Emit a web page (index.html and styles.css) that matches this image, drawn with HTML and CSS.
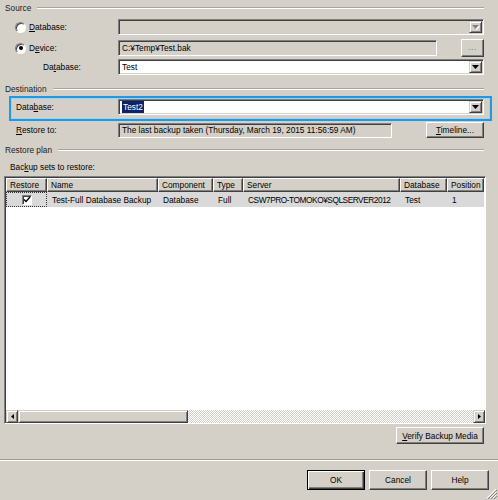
FILE: index.html
```html
<!DOCTYPE html>
<html>
<head>
<meta charset="utf-8">
<link rel="stylesheet" href="styles.css">
</head>
<body>
<div class="main">
  <div class="hdr"><span>Source</span><i></i></div>

  <div class="row r1">
    <div class="lab"><span class="radio"></span><span><u>D</u>atabase:</span></div>
    <div class="combo disabled"><div class="val"></div><div class="ddbtn"><svg width="7" height="4" viewBox="0 0 7 4"><path d="M0 0h7L3.5 4z" fill="#808080"/></svg></div></div>
  </div>

  <div class="row r2">
    <div class="lab"><span class="radio on"></span><span>D<u>e</u>vice:</span></div>
    <div class="tb disabled dev">C:¥Temp¥Test.bak</div>
    <div class="btn dots">...</div>
  </div>

  <div class="row r3">
    <div class="lab ind">Da<u>t</u>abase:</div>
    <div class="combo"><div class="val">Test</div><div class="ddbtn"><svg width="7" height="4" viewBox="0 0 7 4"><path d="M0 0h7L3.5 4z" fill="#000"/></svg></div></div>
  </div>

  <div class="hdr h2"><span>Destination</span><i></i></div>

  <div class="hilite">
    <div class="lab lab2">Data<u>b</u>ase:</div>
    <div class="combo"><div class="val"><span class="sel">Test2</span></div><div class="ddbtn"><svg width="7" height="4" viewBox="0 0 7 4"><path d="M0 0h7L3.5 4z" fill="#000"/></svg></div></div>
  </div>

  <div class="row r4">
    <div class="lab lab3"><u>R</u>estore to:</div>
    <div class="tb disabled rto">The last backup taken (Thursday, March 19, 2015 11:56:59 AM)</div>
    <div class="btn tl"><span><u>T</u>imeline...</span></div>
  </div>

  <div class="hdr h3"><span>Restore plan</span><i></i></div>

  <div class="sets">Bac<u>k</u>up sets to restore:</div>

  <div class="grid">
    <div class="inner">
      <div class="cols head">
        <div class="th">Restore</div>
        <div class="th">Name</div>
        <div class="th">Component</div>
        <div class="th">Type</div>
        <div class="th">Server</div>
        <div class="th">Database</div>
        <div class="th">Position</div>
      </div>
      <div class="cols datarow">
        <div class="td chk"><span class="cb"><svg width="8" height="8" viewBox="0 0 8 8"><path d="M1 3.5l2 2 4-4.5" fill="none" stroke="#000" stroke-width="1.4"/></svg></span></div>
        <div class="td">Test-Full Database Backup</div>
        <div class="td">Database</div>
        <div class="td">Full</div>
        <div class="td srv">CSW7PRO-TOMOKO¥SQLSERVER2012</div>
        <div class="td">Test</div>
        <div class="td">1</div>
      </div>
      <div class="fill"></div>
      <div class="hs">
        <div class="sbb"><svg width="3" height="5" viewBox="0 0 3 5"><path d="M3 0v5L0 2.5z" fill="#000"/></svg></div>
        <div class="thumb"></div>
        <div class="track"></div>
        <div class="sbb"><svg width="3" height="5" viewBox="0 0 3 5"><path d="M0 0v5l3-2.5z" fill="#000"/></svg></div>
      </div>
    </div>
  </div>

  <div class="vrow"><div class="btn verify"><span><u>V</u>erify Backup Media</span></div></div>
</div>

<div class="sep"></div>

<div class="foot">
  <div class="btn big def">OK</div>
  <div class="btn big">Cancel</div>
  <div class="btn big">Help</div>
</div>

<svg class="grip" width="11" height="11" viewBox="0 0 11 11">
  <path d="M10 1L1 10M10 4L4 10M10 7L7 10" stroke="#fff" stroke-width="1"/>
  <path d="M11 2L2 11M11 5L5 11M11 8L8 11" stroke="#808080" stroke-width="1"/>
</svg>
</body>
</html>
```

FILE: styles.css
```css
* { box-sizing: border-box; }
body {
  margin: 0;
  width: 498px;
  height: 500px;
  overflow: hidden;
  position: relative;
  background: #d4d0c8;
  font-family: "Liberation Sans", Arial, sans-serif;
  font-size: 8.3px;
  color: #000;
}
u { text-decoration: underline; text-underline-offset: 1px; }
.main { margin-left: 4px; width: 482px; }

.hdr { display: flex; align-items: center; height: 16px; padding-left: 1px; color: #222; }
.hdr i { flex: 1; margin: 0 2px 0 6px; border-top: 1px solid #a8a49c; border-bottom: 1px solid #fff; }
.h2 { margin-top: 5px; }
.h3 { margin-top: 3px; }

.row { display: flex; align-items: center; }
.r1 { height: 22px; }
.r2 { height: 20px; }
.r3 { height: 18px; }
.r4 { height: 18px; }

.lab { width: 114px; flex: none; display: flex; align-items: center; white-space: nowrap; }
.ind { padding-left: 39px; }
.lab2 { width: 107px; padding-left: 5px; }
.lab3 { padding-left: 12px; }

.radio {
  width: 11px; height: 11px; margin-left: 11px; margin-right: 3px;
  border-radius: 50%; background: #fff;
  border: 1px solid; border-color: #808080 #fff #fff #808080;
  box-shadow: inset 1px 1px #404040;
  display: flex; align-items: center; justify-content: center;
}
.radio.on::after { content: ""; width: 4px; height: 4px; border-radius: 50%; background: #000; }

.combo, .tb {
  height: 16px; background: #fff;
  border: 1px solid; border-color: #808080 #fff #fff #808080;
  box-shadow: inset 1px 1px #404040, inset -1px -1px #d4d0c8;
  padding: 1px;
}
.combo { flex: 1; margin-right: 2px; display: flex; }
.disabled { background: #d4d0c8; }
.val { flex: 1; padding-left: 2px; line-height: 12px; white-space: nowrap; overflow: hidden; }
.sel { background: #0a246a; color: #fff; padding: 1px 1px; }
.ddbtn {
  width: 13px; flex: none; background: #d4d0c8;
  border: 1px solid; border-color: #d4d0c8 #404040 #404040 #d4d0c8;
  box-shadow: inset 1px 1px #fff, inset -1px -1px #808080;
  display: flex; align-items: center; justify-content: center;
}
.disabled .ddbtn svg { filter: drop-shadow(1px 1px 0 #fff); }

.tb { line-height: 12px; padding-left: 3px; white-space: nowrap; overflow: hidden; }
.dev { width: 319px; height: 16px; }
.rto { width: 274px; height: 15px; line-height: 11px; }

.btn {
  background: #d4d0c8;
  border: 1px solid; border-color: #fff #404040 #404040 #fff;
  box-shadow: inset -1px -1px #808080;
  display: flex; align-items: center; justify-content: center;
  white-space: nowrap;
}
.dots { width: 23px; height: 18px; margin-left: auto; margin-right: 2px; color: #6a7890; letter-spacing: 0.5px; padding-bottom: 2px; }
.tl { width: 58px; height: 16px; margin-left: auto; margin-right: 2px; }

.hilite {
  display: flex; align-items: flex-start;
  margin: -1px -6px 0 5px; height: 25px;
  border: 2px solid #1f9ae2;
  box-shadow: inset 0 0 0 1px #9fd2f2;
  padding: 1px 6px 0 0;
}
.hilite .lab { height: 16px; }
.hilite .combo { margin-right: 0; }

.sets { height: 14px; margin-top: 2px; padding-left: 6px; display: flex; align-items: center; }

.grid {
  margin-top: 2px; height: 248px;
  border: 1px solid; border-color: #808080 #fff #fff #808080;
}
.inner {
  height: 100%; background: #fff;
  border-left: 1px solid #404040; border-top: 1px solid #404040;
  display: flex; flex-direction: column; overflow: hidden;
}
.cols { display: grid; grid-template-columns: 41px 111px 55px 30px 157px 47px 37px; }
.th {
  height: 14px; padding-left: 3px; background: #d4d0c8;
  border: 1px solid; border-color: #fff #404040 #404040 #fff;
  box-shadow: inset -1px -1px #808080;
  display: flex; align-items: center; white-space: nowrap; overflow: hidden;
}
.datarow { background: #d9d9d9; width: 478px; }
.td { height: 15px; padding-left: 5px; display: flex; align-items: center; white-space: nowrap; overflow: hidden; }
.srv { letter-spacing: -0.45px; }
.chk { justify-content: center; padding-left: 0; outline: 1px dotted #333; outline-offset: -1px; }
.cb {
  width: 10px; height: 10px; background: #fff;
  border: 1px solid; border-color: #808080 #fff #fff #808080;
  box-shadow: inset 1px 1px #404040;
  display: flex; align-items: center; justify-content: center;
}
.fill { flex: 1; }
.hs { height: 13px; display: flex; }
.sbb {
  width: 12px; background: #d4d0c8;
  border: 1px solid; border-color: #d4d0c8 #404040 #404040 #d4d0c8;
  box-shadow: inset 1px 1px #fff, inset -1px -1px #808080;
  display: flex; align-items: center; justify-content: center;
}
.thumb {
  width: 170px; background: #d4d0c8;
  border: 1px solid; border-color: #d4d0c8 #404040 #404040 #d4d0c8;
  box-shadow: inset 1px 1px #fff, inset -1px -1px #808080;
}
.track { flex: 1; background: repeating-conic-gradient(#d4d0c8 0 25%, #fff 0 50%) 0 0 / 2px 2px; }

.vrow { display: flex; justify-content: flex-end; margin-top: 3px; padding-right: 2px; }
.verify { width: 88px; height: 17px; }

.sep { margin-top: 15px; border-top: 1px solid #a09c94; border-bottom: 1px solid #fff; }

.foot { display: flex; justify-content: flex-end; gap: 4px; margin-top: 9px; padding-right: 9px; }
.big { width: 58px; height: 20px; }
.def { border: 1px solid #000; box-shadow: inset 1px 1px #fff, inset -1px -1px #404040, inset -2px -2px #808080; }

.grip { position: absolute; right: 1px; bottom: 1px; }
```
